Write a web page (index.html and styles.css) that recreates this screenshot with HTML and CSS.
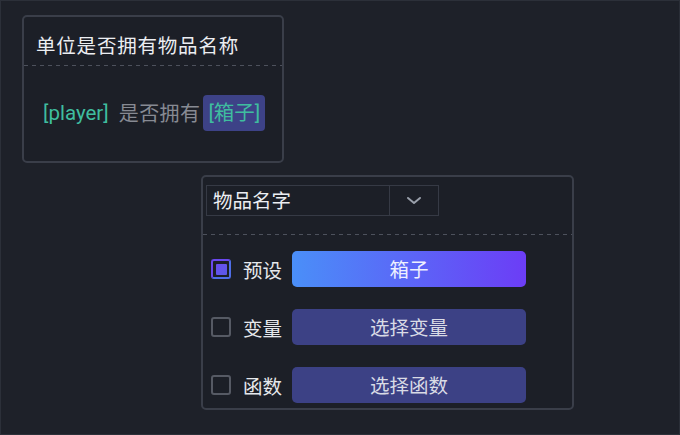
FILE: index.html
```html
<!DOCTYPE html>
<html lang="zh">
<head>
<meta charset="utf-8">
<link rel="stylesheet" href="styles.css">
</head>
<body>
<div class="canvas">
  <div class="card card-summary">
    <div class="card-title">单位是否拥有物品名称</div>
    <div class="dash"></div>
    <div class="summary">
      <span class="ref">[player]</span>
      <span class="plain">是否拥有</span>
      <span class="chip">[箱子]</span>
    </div>
  </div>

  <div class="card card-edit">
    <div class="select">
      <div class="select-value">物品名字</div>
      <div class="select-arrow">
        <svg width="16" height="10" viewBox="0 0 16 10"><path d="M2 2 L8 7 L14 2" fill="none" stroke="#9aa0ab" stroke-width="2" stroke-linecap="round" stroke-linejoin="round"/></svg>
      </div>
    </div>
    <div class="dash dash-edit"></div>
    <div class="options">
      <div class="option">
        <span class="check checked"><span class="check-dot"></span></span>
        <span class="opt-label">预设</span>
        <span class="btn btn-grad">箱子</span>
      </div>
      <div class="option">
        <span class="check"></span>
        <span class="opt-label">变量</span>
        <span class="btn">选择变量</span>
      </div>
      <div class="option">
        <span class="check"></span>
        <span class="opt-label">函数</span>
        <span class="btn">选择函数</span>
      </div>
    </div>
  </div>
</div>
</body>
</html>
```
FILE: styles.css
```css
* { box-sizing: border-box; }
html, body { margin: 0; padding: 0; }
body {
  width: 680px;
  height: 435px;
  background: #1e2129;
  font-family: "Noto Sans CJK SC", "Noto Sans", sans-serif;
  overflow: hidden;
}
.canvas {
  width: 680px;
  height: 435px;
  border: 1px solid #2c3039;
  border-right-color: #2a2e37;
  padding: 14px 0 0 21px;
}
.card {
  border: 2px solid #3a3e49;
  border-radius: 5px;
  background: #1c1f27;
}
.card-summary {
  width: 262px;
  height: 148px;
}
.card-title {
  height: 48px;
  padding: 14px 0 0 12px;
  font-size: 19.5px;
  letter-spacing: 0.8px;
  line-height: 28px;
  color: #eceef2;
}
.dash {
  height: 1px;
  background: repeating-linear-gradient(to right, #4d515c 0 4px, transparent 4px 8px);
}
.summary {
  display: flex;
  align-items: center;
  height: 94px;
  padding: 0 0 0 19px;
  font-size: 20px;
  line-height: 28px;
}
.ref {
  font-family: "Roboto", "Liberation Sans", sans-serif;
  color: #3fbd9f;
  font-size: 20.5px;
}
.plain {
  color: #878a93;
  margin-left: 10px;
  letter-spacing: 0.4px;
}
.chip {
  margin-left: 3px;
  background: #3d4287;
  color: #3fbd9f;
  border-radius: 4px;
  height: 36px;
  line-height: 36px;
  padding: 0 5px;
  font-family: "Roboto", "Noto Sans CJK SC", sans-serif;
  font-size: 20.5px;
}
.card-edit {
  width: 373px;
  height: 235px;
  margin: 12px 0 0 179px;
  padding: 8px 0 0 2px;
}
.select {
  display: flex;
  width: 233px;
  height: 31px;
  border: 1px solid #363a45;
  margin-left: 1px;
}
.select-value {
  width: 183px;
  border-right: 1px solid #363a45;
  padding-left: 6px;
  font-size: 19.5px;
  line-height: 28px;
  color: #eceef2;
}
.select-arrow {
  flex: 1;
  display: flex;
  align-items: center;
  justify-content: center;
}
.dash-edit {
  margin: 18px 0 0 -2px;
  width: 369px;
}
.options {
  display: flex;
  flex-direction: column;
  gap: 22px;
  padding: 16px 0 0 6px;
}
.option {
  display: flex;
  align-items: center;
  height: 36px;
}
.check {
  width: 20px;
  height: 20px;
  border: 2px solid #565a64;
  border-radius: 3px;
  display: flex;
  align-items: center;
  justify-content: center;
}
.check.checked {
  border-color: #5b4fe0;
  border-top-color: #6a48ee;
  border-left-color: #6a48ee;
  border-bottom-color: #4f6ee8;
  border-right-color: #4f6ee8;
}
.check-dot {
  width: 11px;
  height: 11px;
  background: linear-gradient(135deg, #6a4ef0, #5a5ae6);
  border-radius: 1px;
}
.opt-label {
  margin-left: 12px;
  width: 49px;
  font-size: 19.5px;
  color: #e6e8ec;
}
.btn {
  width: 234px;
  height: 36px;
  border-radius: 5px;
  background: #3c4185;
  color: #d9dbe5;
  font-size: 19.5px;
  line-height: 36px;
  text-align: center;
}
.btn-grad {
  background: linear-gradient(to right, #4a8ff8, #6c3df6);
  color: #eef0ff;
}
```
